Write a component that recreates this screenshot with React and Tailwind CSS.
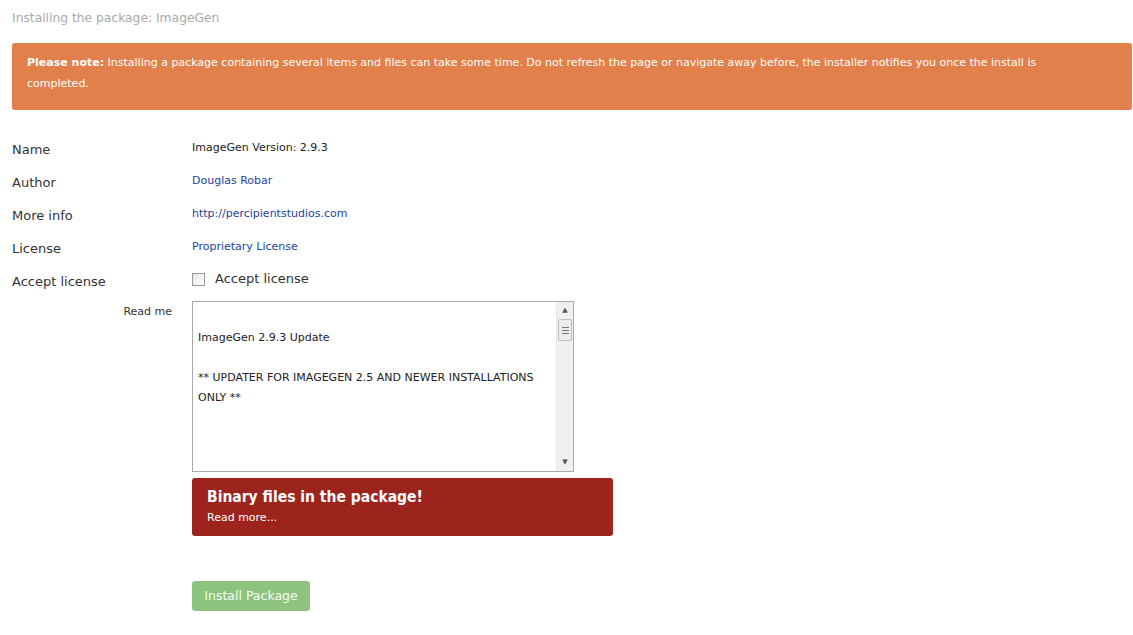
export default function App() {
  const rows = [
    { label: 'Name', value: 'ImageGen Version: 2.9.3', link: false },
    { label: 'Author', value: 'Douglas Robar', link: true },
    { label: 'More info', value: 'http://percipientstudios.com', link: true },
    { label: 'License', value: 'Proprietary License', link: true },
  ];

  return (
    <div className="min-h-screen bg-white font-['DejaVu_Sans',sans-serif] text-[#333]">
      <div className="pl-3 pr-[1px] pt-[9px]">
        {/* Header */}
        <h1 className="text-[12.3px] leading-[18px] text-[#aaa] font-normal">
          Installing the package: ImageGen
        </h1>

        {/* Notice */}
        <p className="mt-4 rounded-[3px] bg-[#e1804a] pl-[15px] pr-[40px] pt-[9px] pb-[16px] text-[11px] leading-[21px] text-white">
          <b>Please note:</b>{' '}Installing a package containing several items and files can take some time. Do not refresh the page or navigate away before, the installer notifies you once the install is completed.
        </p>

        {/* Properties */}
        <div className="mt-[30px] flex flex-col">
          {rows.map((r) => (
            <div key={r.label} className="flex h-[33px] items-start">
              <div className="w-[180px] text-[13px] leading-[18px] pt-[1px]">{r.label}</div>
              <div className={`text-[11px] leading-[16px] ${r.link ? 'text-[#22449a]' : 'text-[#222]'}`}>
                {r.value}
              </div>
            </div>
          ))}
          <div className="flex h-[29px] items-start">
            <div className="w-[180px] text-[13px] leading-[18px] pt-[1px]">Accept license</div>
            <label className="flex items-center gap-[10px] text-[13px] leading-[18px] -mt-[2px]">
              <span className="inline-block h-[13px] w-[13px] border border-[#9a9a9a] bg-gradient-to-br from-[#e6e6e6] to-white" />
              Accept license
            </label>
          </div>
        </div>

        {/* Read me */}
        <div className="flex">
          <div className="w-[180px] pr-[20px] pt-[3px] text-right text-[11px] leading-[16px]">Read me</div>
          <div className="flex flex-col">
            <div className="flex h-[171px] w-[382px] border border-[#aaa] bg-white">
              <div className="flex-1 px-[5px] pt-[26px] text-[11px] leading-[20px] text-[#222]">
                <p>ImageGen 2.9.3 Update</p>
                <p className="mt-[20px]">** UPDATER FOR IMAGEGEN 2.5 AND NEWER INSTALLATIONS ONLY **</p>
              </div>
              <div className="flex w-[17px] flex-col bg-[#f0f0f0] border-l border-[#e6e6e6]">
                <div className="flex h-[17px] items-center justify-center text-[7px] text-[#555]">▲</div>
                <div className="mx-[1px] flex h-[22px] flex-col items-center justify-center gap-[2px] rounded-[2px] border border-[#bdbdbd] bg-[#ececec]">
                  <span className="h-px w-[7px] bg-[#777]" />
                  <span className="h-px w-[7px] bg-[#777]" />
                  <span className="h-px w-[7px] bg-[#777]" />
                </div>
                <div className="flex-1" />
                <div className="flex h-[17px] items-center justify-center text-[7px] text-[#555]">▼</div>
              </div>
            </div>

            {/* Binary warning */}
            <div className="mt-[6px] h-[58px] w-[421px] rounded-[3px] bg-[#9c241d] px-[15px] pt-[9px] text-white">
              <div className="font-['DejaVu_Sans_Condensed','DejaVu_Sans',sans-serif] text-[15.5px] leading-[21px] font-bold">Binary files in the package!</div>
              <div className="mt-[2px] text-[11px] leading-[16px]">Read more...</div>
            </div>

            <button className="mt-[45px] h-[30px] w-[118px] rounded-[3px] bg-[#8cc47f] text-[12.5px] text-[#f4fbf1]">
              Install Package
            </button>
          </div>
        </div>
      </div>
    </div>
  );
}
